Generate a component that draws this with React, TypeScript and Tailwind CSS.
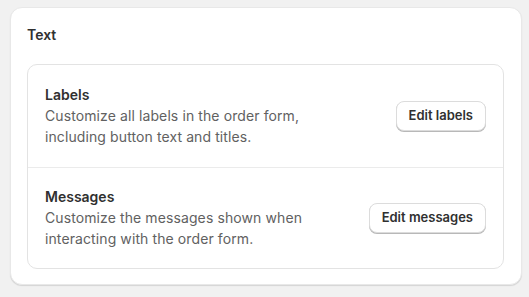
import React from "react";

function Row({ title, lines, button, className }: { title: string; lines: string[]; button: string; className: string }) {
  return (
    <div className={`flex items-center justify-between pl-[17px] pr-[17px] ${className}`}>
      <div className="flex flex-col">
        <div className="text-[14px] leading-[20px] font-semibold text-[#303030]">{title}</div>
        {lines.map((l) => (
          <div key={l} className="text-[14px] leading-[21px] text-[#616161] tracking-[0.1px]">{l}</div>
        ))}
      </div>
      <button className="h-[30px] px-[12px] rounded-[8px] bg-white border border-[#dcdcdc] shadow-[0_1px_0_#b8b8b8] text-[13px] font-semibold text-[#303030]">
        {button}
      </button>
    </div>
  );
}

export default function App() {
  return (
    <div className="w-[529px] h-[297px] bg-[#f1f1f1] pt-[7px] pl-[10px]" style={{ fontFamily: "Inter, 'Noto Sans', sans-serif" }}>
      <div className="w-[512px] h-[278px] bg-white rounded-[12px] border border-[#e8e8e8] shadow-[0_1px_1px_rgba(0,0,0,0.12)] pl-[16px] pr-[17px] pt-[17px]">
        <div className="text-[14px] leading-[20px] font-semibold text-[#303030] mb-[19px]">Text</div>
        <div className="rounded-[10px] border border-[#e3e3e3]">
          <Row title="Labels" lines={["Customize all labels in the order form,", "including button text and titles."]} button="Edit labels" className="h-[103px] border-b border-[#ebebeb]" />
          <Row title="Messages" lines={["Customize the messages shown when", "interacting with the order form."]} button="Edit messages" className="h-[100px]" />
        </div>
      </div>
    </div>
  );
}
